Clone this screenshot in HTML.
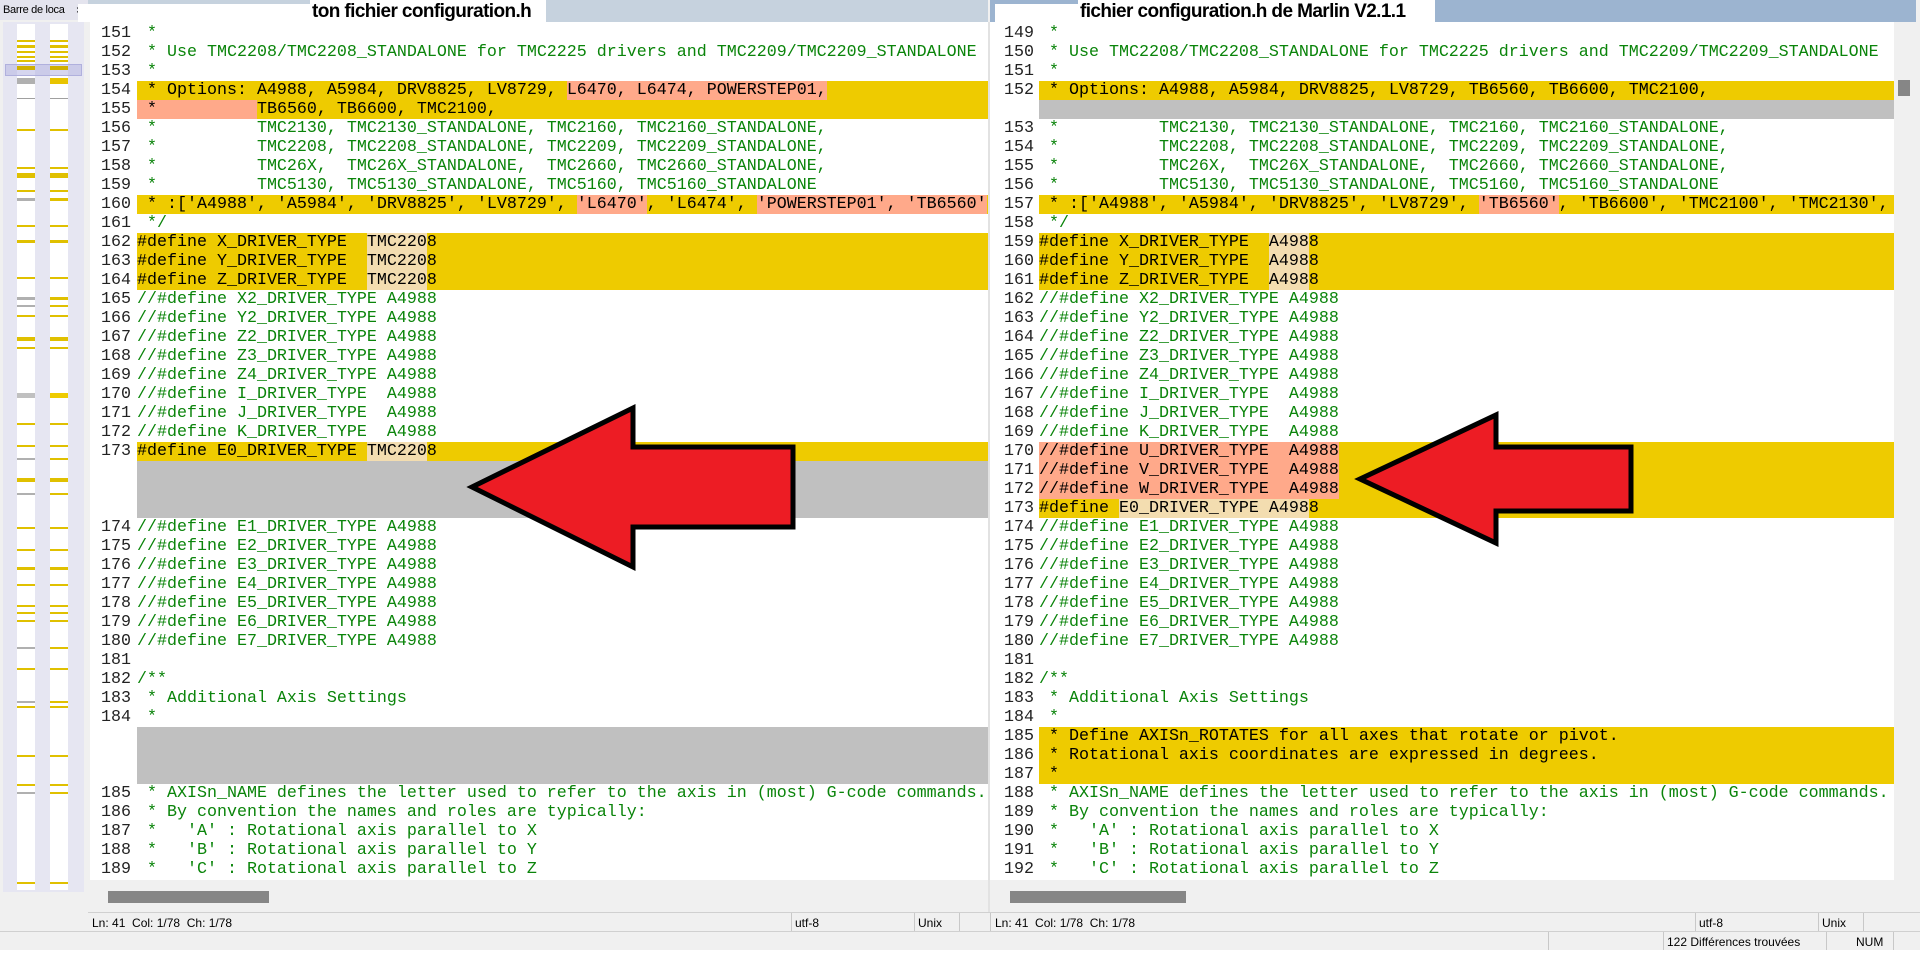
<!DOCTYPE html>
<html><head><meta charset="utf-8"><style>
*{margin:0;padding:0;box-sizing:border-box}
body{width:1920px;height:956px;background:#f0f0f0;position:relative;overflow:hidden;font-family:"Liberation Sans",sans-serif}
.abs{position:absolute}
.pane{position:absolute;top:22px;height:858px;background:#fff;overflow:hidden}
.rows{position:absolute;top:2px;left:0;right:0}
.r{display:flex;height:19px;line-height:19px;white-space:pre;font-family:"Liberation Mono",monospace;font-size:16.67px;color:#000}
.n{flex:none;text-align:right;color:#222}
#L .n{width:41px;margin-right:6px}
#R .n{width:44px;margin-right:5px}
.c{flex:1}
.g{color:#0a840a}
.y{background:#eecb00}
.x{background:#c0c0c0}
.s{background:#ffa98a}
.t{background:#f3ddb0}
.loc{position:absolute;height:2px}
.st{position:absolute;font-size:12px;color:#000;top:916px}
.sep{position:absolute;width:1px;background:#c8c8c8}
</style></head><body>
<!-- location bar -->
<div class="abs" style="left:0;top:0;width:88px;height:20px;background:#e4e4ee;font-size:11px;line-height:20px;padding-left:3px;color:#000;letter-spacing:-0.3px;white-space:nowrap;overflow:hidden">Barre de loca<span style="position:absolute;left:76px;top:0;font-size:12px">×</span></div>
<div class="abs" style="left:3px;top:22px;width:81px;height:870px;background:#e6e6f2"></div>
<div class="abs" style="left:17px;top:24px;width:18px;height:866px;background:#fff"></div>
<div class="abs" style="left:50px;top:24px;width:18px;height:866px;background:#fff"></div>
<div class="abs" style="left:5px;top:64px;width:77px;height:12px;background:rgba(180,180,225,0.55);border:1px solid #b0b0dd"></div>

<!-- titles -->
<div class="abs" style="left:88px;top:0;width:900px;height:22px;background:#c6d2de"></div>
<div class="abs" style="left:78px;top:4px;width:234px;height:18px;background:#fff"></div>
<div class="abs" style="left:310px;top:0;width:236px;height:24px;background:#fff;font-weight:bold;font-size:19px;line-height:24px;letter-spacing:-0.6px;padding-left:2px">ton fichier configuration.h</div>
<div class="abs" style="left:990px;top:0;width:926px;height:22px;background:#9cb4d0"></div>
<div class="abs" style="left:995px;top:4px;width:85px;height:18px;background:#fff"></div>
<div class="abs" style="left:1078px;top:0;width:357px;height:24px;background:#fff;font-weight:bold;font-size:19px;line-height:24px;letter-spacing:-0.6px;padding-left:2px">fichier configuration.h de Marlin V2.1.1</div>

<!-- left pane -->
<div class="pane" id="L" style="left:90px;width:898px"><div class="rows">
<div class="r"><span class="n">151</span><span class="c g"> *</span></div>
<div class="r"><span class="n">152</span><span class="c g"> * Use TMC2208/TMC2208_STANDALONE for TMC2225 drivers and TMC2209/TMC2209_STANDALONE</span></div>
<div class="r"><span class="n">153</span><span class="c g"> *</span></div>
<div class="r"><span class="n">154</span><span class="c y"> * Options: A4988, A5984, DRV8825, LV8729, <span class="s">L6470, L6474, POWERSTEP01,</span></span></div>
<div class="r"><span class="n">155</span><span class="c y"><span class="s"> *          </span>TB6560, TB6600, TMC2100,</span></div>
<div class="r"><span class="n">156</span><span class="c g"> *          TMC2130, TMC2130_STANDALONE, TMC2160, TMC2160_STANDALONE,</span></div>
<div class="r"><span class="n">157</span><span class="c g"> *          TMC2208, TMC2208_STANDALONE, TMC2209, TMC2209_STANDALONE,</span></div>
<div class="r"><span class="n">158</span><span class="c g"> *          TMC26X,  TMC26X_STANDALONE,  TMC2660, TMC2660_STANDALONE,</span></div>
<div class="r"><span class="n">159</span><span class="c g"> *          TMC5130, TMC5130_STANDALONE, TMC5160, TMC5160_STANDALONE</span></div>
<div class="r"><span class="n">160</span><span class="c y"> * :['A4988', 'A5984', 'DRV8825', 'LV8729', <span class="s">'L6470'</span>, 'L6474', <span class="s">'POWERSTEP01', 'TB6560'</span></span></div>
<div class="r"><span class="n">161</span><span class="c g"> */</span></div>
<div class="r"><span class="n">162</span><span class="c y">#define X_DRIVER_TYPE  <span class="t">TMC220</span>8</span></div>
<div class="r"><span class="n">163</span><span class="c y">#define Y_DRIVER_TYPE  <span class="t">TMC220</span>8</span></div>
<div class="r"><span class="n">164</span><span class="c y">#define Z_DRIVER_TYPE  <span class="t">TMC220</span>8</span></div>
<div class="r"><span class="n">165</span><span class="c g">//#define X2_DRIVER_TYPE A4988</span></div>
<div class="r"><span class="n">166</span><span class="c g">//#define Y2_DRIVER_TYPE A4988</span></div>
<div class="r"><span class="n">167</span><span class="c g">//#define Z2_DRIVER_TYPE A4988</span></div>
<div class="r"><span class="n">168</span><span class="c g">//#define Z3_DRIVER_TYPE A4988</span></div>
<div class="r"><span class="n">169</span><span class="c g">//#define Z4_DRIVER_TYPE A4988</span></div>
<div class="r"><span class="n">170</span><span class="c g">//#define I_DRIVER_TYPE  A4988</span></div>
<div class="r"><span class="n">171</span><span class="c g">//#define J_DRIVER_TYPE  A4988</span></div>
<div class="r"><span class="n">172</span><span class="c g">//#define K_DRIVER_TYPE  A4988</span></div>
<div class="r"><span class="n">173</span><span class="c y">#define E0_DRIVER_TYPE <span class="t">TMC220</span>8</span></div>
<div class="r"><span class="n"></span><span class="c x"></span></div>
<div class="r"><span class="n"></span><span class="c x"></span></div>
<div class="r"><span class="n"></span><span class="c x"></span></div>
<div class="r"><span class="n">174</span><span class="c g">//#define E1_DRIVER_TYPE A4988</span></div>
<div class="r"><span class="n">175</span><span class="c g">//#define E2_DRIVER_TYPE A4988</span></div>
<div class="r"><span class="n">176</span><span class="c g">//#define E3_DRIVER_TYPE A4988</span></div>
<div class="r"><span class="n">177</span><span class="c g">//#define E4_DRIVER_TYPE A4988</span></div>
<div class="r"><span class="n">178</span><span class="c g">//#define E5_DRIVER_TYPE A4988</span></div>
<div class="r"><span class="n">179</span><span class="c g">//#define E6_DRIVER_TYPE A4988</span></div>
<div class="r"><span class="n">180</span><span class="c g">//#define E7_DRIVER_TYPE A4988</span></div>
<div class="r"><span class="n">181</span><span class="c g"></span></div>
<div class="r"><span class="n">182</span><span class="c g">/**</span></div>
<div class="r"><span class="n">183</span><span class="c g"> * Additional Axis Settings</span></div>
<div class="r"><span class="n">184</span><span class="c g"> *</span></div>
<div class="r"><span class="n"></span><span class="c x"></span></div>
<div class="r"><span class="n"></span><span class="c x"></span></div>
<div class="r"><span class="n"></span><span class="c x"></span></div>
<div class="r"><span class="n">185</span><span class="c g"> * AXISn_NAME defines the letter used to refer to the axis in (most) G-code commands.</span></div>
<div class="r"><span class="n">186</span><span class="c g"> * By convention the names and roles are typically:</span></div>
<div class="r"><span class="n">187</span><span class="c g"> *   'A' : Rotational axis parallel to X</span></div>
<div class="r"><span class="n">188</span><span class="c g"> *   'B' : Rotational axis parallel to Y</span></div>
<div class="r"><span class="n">189</span><span class="c g"> *   'C' : Rotational axis parallel to Z</span></div>
</div></div>

<!-- right pane -->
<div class="pane" id="R" style="left:990px;width:904px"><div class="rows">
<div class="r"><span class="n">149</span><span class="c g"> *</span></div>
<div class="r"><span class="n">150</span><span class="c g"> * Use TMC2208/TMC2208_STANDALONE for TMC2225 drivers and TMC2209/TMC2209_STANDALONE</span></div>
<div class="r"><span class="n">151</span><span class="c g"> *</span></div>
<div class="r"><span class="n">152</span><span class="c y"> * Options: A4988, A5984, DRV8825, LV8729, TB6560, TB6600, TMC2100,</span></div>
<div class="r"><span class="n"></span><span class="c x"></span></div>
<div class="r"><span class="n">153</span><span class="c g"> *          TMC2130, TMC2130_STANDALONE, TMC2160, TMC2160_STANDALONE,</span></div>
<div class="r"><span class="n">154</span><span class="c g"> *          TMC2208, TMC2208_STANDALONE, TMC2209, TMC2209_STANDALONE,</span></div>
<div class="r"><span class="n">155</span><span class="c g"> *          TMC26X,  TMC26X_STANDALONE,  TMC2660, TMC2660_STANDALONE,</span></div>
<div class="r"><span class="n">156</span><span class="c g"> *          TMC5130, TMC5130_STANDALONE, TMC5160, TMC5160_STANDALONE</span></div>
<div class="r"><span class="n">157</span><span class="c y"> * :['A4988', 'A5984', 'DRV8825', 'LV8729', <span class="s">'TB6560'</span>, 'TB6600', 'TMC2100', 'TMC2130',</span></div>
<div class="r"><span class="n">158</span><span class="c g"> */</span></div>
<div class="r"><span class="n">159</span><span class="c y">#define X_DRIVER_TYPE  <span class="t">A498</span>8</span></div>
<div class="r"><span class="n">160</span><span class="c y">#define Y_DRIVER_TYPE  <span class="t">A498</span>8</span></div>
<div class="r"><span class="n">161</span><span class="c y">#define Z_DRIVER_TYPE  <span class="t">A498</span>8</span></div>
<div class="r"><span class="n">162</span><span class="c g">//#define X2_DRIVER_TYPE A4988</span></div>
<div class="r"><span class="n">163</span><span class="c g">//#define Y2_DRIVER_TYPE A4988</span></div>
<div class="r"><span class="n">164</span><span class="c g">//#define Z2_DRIVER_TYPE A4988</span></div>
<div class="r"><span class="n">165</span><span class="c g">//#define Z3_DRIVER_TYPE A4988</span></div>
<div class="r"><span class="n">166</span><span class="c g">//#define Z4_DRIVER_TYPE A4988</span></div>
<div class="r"><span class="n">167</span><span class="c g">//#define I_DRIVER_TYPE  A4988</span></div>
<div class="r"><span class="n">168</span><span class="c g">//#define J_DRIVER_TYPE  A4988</span></div>
<div class="r"><span class="n">169</span><span class="c g">//#define K_DRIVER_TYPE  A4988</span></div>
<div class="r"><span class="n">170</span><span class="c y"><span class="s">//#define U_DRIVER_TYPE  A4988</span></span></div>
<div class="r"><span class="n">171</span><span class="c y"><span class="s">//#define V_DRIVER_TYPE  A4988</span></span></div>
<div class="r"><span class="n">172</span><span class="c y"><span class="s">//#define W_DRIVER_TYPE  A4988</span></span></div>
<div class="r"><span class="n">173</span><span class="c y">#define <span class="t">E0_DRIVER_TYPE A498</span>8</span></div>
<div class="r"><span class="n">174</span><span class="c g">//#define E1_DRIVER_TYPE A4988</span></div>
<div class="r"><span class="n">175</span><span class="c g">//#define E2_DRIVER_TYPE A4988</span></div>
<div class="r"><span class="n">176</span><span class="c g">//#define E3_DRIVER_TYPE A4988</span></div>
<div class="r"><span class="n">177</span><span class="c g">//#define E4_DRIVER_TYPE A4988</span></div>
<div class="r"><span class="n">178</span><span class="c g">//#define E5_DRIVER_TYPE A4988</span></div>
<div class="r"><span class="n">179</span><span class="c g">//#define E6_DRIVER_TYPE A4988</span></div>
<div class="r"><span class="n">180</span><span class="c g">//#define E7_DRIVER_TYPE A4988</span></div>
<div class="r"><span class="n">181</span><span class="c g"></span></div>
<div class="r"><span class="n">182</span><span class="c g">/**</span></div>
<div class="r"><span class="n">183</span><span class="c g"> * Additional Axis Settings</span></div>
<div class="r"><span class="n">184</span><span class="c g"> *</span></div>
<div class="r"><span class="n">185</span><span class="c y"> * Define AXISn_ROTATES for all axes that rotate or pivot.</span></div>
<div class="r"><span class="n">186</span><span class="c y"> * Rotational axis coordinates are expressed in degrees.</span></div>
<div class="r"><span class="n">187</span><span class="c y"> *</span></div>
<div class="r"><span class="n">188</span><span class="c g"> * AXISn_NAME defines the letter used to refer to the axis in (most) G-code commands.</span></div>
<div class="r"><span class="n">189</span><span class="c g"> * By convention the names and roles are typically:</span></div>
<div class="r"><span class="n">190</span><span class="c g"> *   'A' : Rotational axis parallel to X</span></div>
<div class="r"><span class="n">191</span><span class="c g"> *   'B' : Rotational axis parallel to Y</span></div>
<div class="r"><span class="n">192</span><span class="c g"> *   'C' : Rotational axis parallel to Z</span></div>
</div></div>

<!-- vertical scrollbar -->
<div class="abs" style="left:1894px;top:22px;width:22px;height:888px;background:#f0f0f0"></div>
<div class="abs" style="left:1898px;top:80px;width:12px;height:16px;background:#868686"></div>

<!-- horizontal scrollbars -->
<div class="abs" style="left:108px;top:891px;width:161px;height:12px;background:#868686"></div>
<div class="abs" style="left:1010px;top:891px;width:176px;height:12px;background:#868686"></div>
<div class="abs" style="left:988px;top:22px;width:2px;height:890px;background:#e2e2e2"></div>

<!-- status bars -->
<div class="abs" style="left:88px;top:912px;width:1832px;height:1px;background:#d0d0d0"></div>
<div class="st" style="left:92px">Ln: 41&nbsp; Col: 1/78&nbsp; Ch: 1/78</div>
<div class="sep" style="left:791px;top:913px;height:18px"></div>
<div class="st" style="left:795px">utf-8</div>
<div class="sep" style="left:914px;top:913px;height:18px"></div>
<div class="st" style="left:918px">Unix</div>
<div class="sep" style="left:959px;top:913px;height:18px"></div>
<div class="sep" style="left:990px;top:913px;height:18px"></div>
<div class="st" style="left:995px">Ln: 41&nbsp; Col: 1/78&nbsp; Ch: 1/78</div>
<div class="sep" style="left:1695px;top:913px;height:18px"></div>
<div class="st" style="left:1699px">utf-8</div>
<div class="sep" style="left:1818px;top:913px;height:18px"></div>
<div class="st" style="left:1822px">Unix</div>
<div class="sep" style="left:1863px;top:913px;height:18px"></div>
<div class="abs" style="left:0;top:931px;width:1920px;height:1px;background:#d0d0d0"></div>
<div class="abs" style="left:0;top:950px;width:1920px;height:6px;background:#fff"></div>
<div class="sep" style="left:1548px;top:932px;height:18px"></div>
<div class="sep" style="left:1663px;top:932px;height:18px"></div>
<div class="st" style="left:1667px;top:935px">122 Différences trouvées</div>
<div class="sep" style="left:1826px;top:932px;height:18px"></div>
<div class="st" style="left:1856px;top:935px">NUM</div>
<div class="sep" style="left:1893px;top:932px;height:18px"></div>

<!-- location stripes -->
<div class="abs" style="left:0;top:0">
<div class="loc" style="left:17px;width:18px;top:40px;background:#e0c000"></div><div class="loc" style="left:50px;width:18px;top:40px;background:#e0c000"></div>
<div class="loc" style="left:17px;width:18px;top:45px;height:3px;background:#e0c000"></div><div class="loc" style="left:50px;width:18px;top:45px;height:3px;background:#e0c000"></div>
<div class="loc" style="left:17px;width:18px;top:51px;background:#e0c000"></div><div class="loc" style="left:50px;width:18px;top:51px;background:#e0c000"></div>
<div class="loc" style="left:17px;width:18px;top:56px;background:#e0c000"></div><div class="loc" style="left:50px;width:18px;top:56px;background:#e0c000"></div>
<div class="loc" style="left:17px;width:18px;top:60px;background:#e0c000"></div><div class="loc" style="left:50px;width:18px;top:60px;background:#e0c000"></div>
<div class="loc" style="left:17px;width:18px;top:66px;height:4px;background:#d0b000"></div><div class="loc" style="left:50px;width:18px;top:66px;height:4px;background:#d0b000"></div>
<div class="loc" style="left:17px;width:18px;top:78px;height:6px;background:#b0b0b0"></div><div class="loc" style="left:50px;width:18px;top:78px;height:6px;background:#e8c400"></div>
<div class="loc" style="left:17px;width:18px;top:98px;height:1px;background:#a0a0a0"></div><div class="loc" style="left:50px;width:18px;top:98px;height:1px;background:#a0a0a0"></div>
<div class="loc" style="left:17px;width:18px;top:129px;background:#e0c000"></div><div class="loc" style="left:50px;width:18px;top:129px;background:#e0c000"></div>
<div class="loc" style="left:17px;width:18px;top:167px;background:#e0c000"></div><div class="loc" style="left:50px;width:18px;top:167px;background:#e0c000"></div>
<div class="loc" style="left:17px;width:18px;top:173px;height:5px;background:#e0c000"></div><div class="loc" style="left:50px;width:18px;top:173px;height:5px;background:#e0c000"></div>
<div class="loc" style="left:17px;width:18px;top:190px;background:#e0c000"></div><div class="loc" style="left:50px;width:18px;top:190px;background:#e0c000"></div>
<div class="loc" style="left:17px;width:18px;top:198px;height:3px;background:#b0b0b0"></div><div class="loc" style="left:50px;width:18px;top:198px;height:3px;background:#e0c000"></div>
<div class="loc" style="left:17px;width:18px;top:225px;background:#e0c000"></div><div class="loc" style="left:50px;width:18px;top:225px;background:#e0c000"></div>
<div class="loc" style="left:17px;width:18px;top:240px;height:3px;background:#e0c000"></div><div class="loc" style="left:50px;width:18px;top:240px;height:3px;background:#e0c000"></div>
<div class="loc" style="left:17px;width:18px;top:277px;background:#e0c000"></div><div class="loc" style="left:50px;width:18px;top:277px;background:#e0c000"></div>
<div class="loc" style="left:17px;width:18px;top:297px;height:3px;background:#b0b0b0"></div><div class="loc" style="left:50px;width:18px;top:297px;height:3px;background:#e0c000"></div>
<div class="loc" style="left:17px;width:18px;top:305px;background:#b0b0b0"></div><div class="loc" style="left:50px;width:18px;top:305px;background:#e0c000"></div>
<div class="loc" style="left:17px;width:18px;top:315px;background:#e0c000"></div><div class="loc" style="left:50px;width:18px;top:315px;background:#e0c000"></div>
<div class="loc" style="left:17px;width:18px;top:337px;height:4px;background:#e0c000"></div><div class="loc" style="left:50px;width:18px;top:337px;height:4px;background:#e0c000"></div>
<div class="loc" style="left:17px;width:18px;top:347px;background:#e0c000"></div><div class="loc" style="left:50px;width:18px;top:347px;background:#e0c000"></div>
<div class="loc" style="left:17px;width:18px;top:393px;height:5px;background:#c0c0c0"></div><div class="loc" style="left:50px;width:18px;top:393px;height:5px;background:#eecb00"></div>
<div class="loc" style="left:17px;width:18px;top:423px;background:#e0c000"></div><div class="loc" style="left:50px;width:18px;top:423px;background:#e0c000"></div>
<div class="loc" style="left:17px;width:18px;top:445px;background:#e0c000"></div><div class="loc" style="left:50px;width:18px;top:445px;background:#e0c000"></div>
<div class="loc" style="left:17px;width:18px;top:458px;background:#b0b0b0"></div><div class="loc" style="left:50px;width:18px;top:458px;background:#e0c000"></div>
<div class="loc" style="left:17px;width:18px;top:478px;height:4px;background:#e0c000"></div><div class="loc" style="left:50px;width:18px;top:478px;height:4px;background:#e0c000"></div>
<div class="loc" style="left:17px;width:18px;top:493px;background:#b0b0b0"></div><div class="loc" style="left:50px;width:18px;top:493px;background:#e0c000"></div>
<div class="loc" style="left:17px;width:18px;top:527px;background:#e0c000"></div><div class="loc" style="left:50px;width:18px;top:527px;background:#e0c000"></div>
<div class="loc" style="left:17px;width:18px;top:549px;background:#e0c000"></div><div class="loc" style="left:50px;width:18px;top:549px;background:#e0c000"></div>
<div class="loc" style="left:17px;width:18px;top:567px;height:3px;background:#e0c000"></div><div class="loc" style="left:50px;width:18px;top:567px;height:3px;background:#e0c000"></div>
<div class="loc" style="left:17px;width:18px;top:584px;background:#e0c000"></div><div class="loc" style="left:50px;width:18px;top:584px;background:#e0c000"></div>
<div class="loc" style="left:17px;width:18px;top:605px;background:#e0c000"></div><div class="loc" style="left:50px;width:18px;top:605px;background:#e0c000"></div>
<div class="loc" style="left:17px;width:18px;top:612px;background:#e0c000"></div><div class="loc" style="left:50px;width:18px;top:612px;background:#e0c000"></div>
<div class="loc" style="left:17px;width:18px;top:620px;background:#e0c000"></div><div class="loc" style="left:50px;width:18px;top:620px;background:#e0c000"></div>
<div class="loc" style="left:17px;width:18px;top:647px;background:#b0b0b0"></div><div class="loc" style="left:50px;width:18px;top:647px;background:#e0c000"></div>
<div class="loc" style="left:17px;width:18px;top:668px;background:#e0c000"></div><div class="loc" style="left:50px;width:18px;top:668px;background:#e0c000"></div>
<div class="loc" style="left:17px;width:18px;top:701px;background:#b0b0b0"></div><div class="loc" style="left:50px;width:18px;top:701px;background:#e0c000"></div>
<div class="loc" style="left:17px;width:18px;top:706px;background:#e0c000"></div><div class="loc" style="left:50px;width:18px;top:706px;background:#e0c000"></div>
<div class="loc" style="left:17px;width:18px;top:755px;background:#e0c000"></div><div class="loc" style="left:50px;width:18px;top:755px;background:#e0c000"></div>
<div class="loc" style="left:17px;width:18px;top:784px;background:#e0c000"></div><div class="loc" style="left:50px;width:18px;top:784px;background:#e0c000"></div>
<div class="loc" style="left:17px;width:18px;top:792px;background:#b0b0b0"></div><div class="loc" style="left:50px;width:18px;top:792px;background:#e0c000"></div>
<div class="loc" style="left:17px;width:18px;top:882px;background:#e0c000"></div><div class="loc" style="left:50px;width:18px;top:882px;background:#e0c000"></div>
</div>

<!-- arrows -->
<svg class="abs" style="left:0;top:0" width="1920" height="956">
<polygon points="472,487 633,408 633,447 793,447 793,527 633,527 633,567" fill="#ed1c24" stroke="#000" stroke-width="5" stroke-linejoin="miter"/>
<polygon points="1360,479 1496,415 1496,447 1631,447 1631,511 1496,511 1496,543" fill="#ed1c24" stroke="#000" stroke-width="5" stroke-linejoin="miter"/>
</svg>
</body></html>
